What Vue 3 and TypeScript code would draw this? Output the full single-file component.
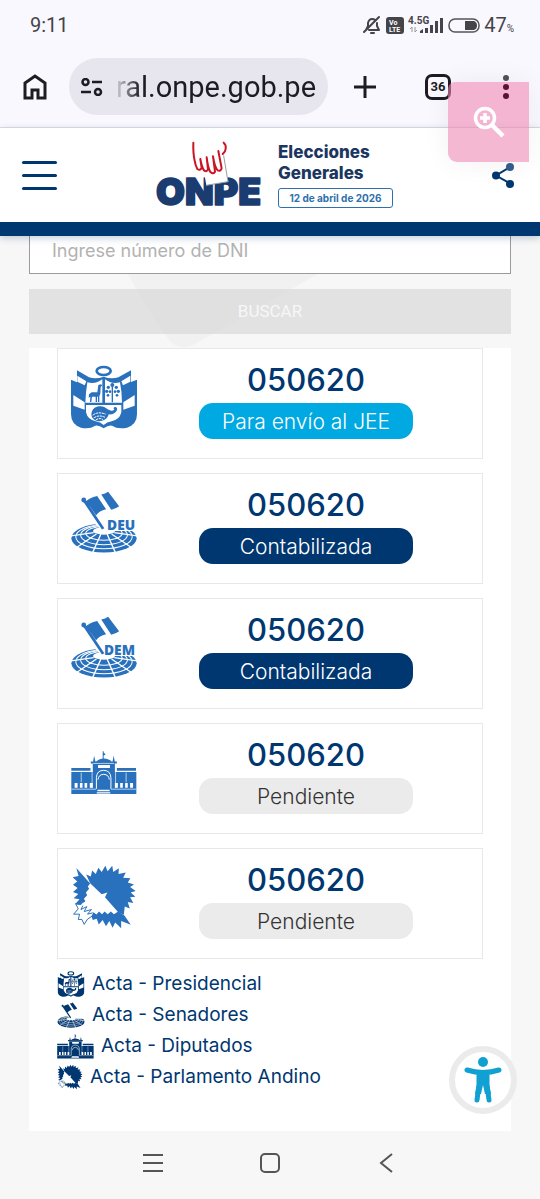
<script setup lang="ts">
import { ref } from 'vue'

interface Box {
  x: number
  y: number
  width: number
  height: number
}

interface Acta {
  icon: string
  box: Box
  tag?: string
  tagX?: number
  name: string
  numero: string
  estado: string
  tone: 'envio' | 'contada' | 'pendiente'
}

interface Leyenda {
  icon: string
  box: Box
  size: string
  label: string
}

const boxes: Record<string, Box> = {
  escudo: { x: 64, y: 60, width: 198, height: 192 },
  curules: { x: 66, y: 64, width: 192, height: 182 },
  palacio: { x: 63, y: 70, width: 200, height: 140 },
  andino: { x: 62, y: 40, width: 200, height: 196 },
}

const viewBox = (b: Box) => `${b.x} ${b.y} ${b.width} ${b.height}`

const actas: Acta[] = [
  { icon: '#escudo', box: boxes.escudo, name: 'Presidencial', numero: '050620', estado: 'Para envío al JEE', tone: 'envio' },
  { icon: '#curules', box: boxes.curules, tag: 'DEU', tagX: 171, name: 'Senadores DEU', numero: '050620', estado: 'Contabilizada', tone: 'contada' },
  { icon: '#curules', box: boxes.curules, tag: 'DEM', tagX: 162, name: 'Senadores DEM', numero: '050620', estado: 'Contabilizada', tone: 'contada' },
  { icon: '#palacio', box: boxes.palacio, name: 'Diputados', numero: '050620', estado: 'Pendiente', tone: 'pendiente' },
  { icon: '#andino', box: boxes.andino, name: 'Parlamento Andino', numero: '050620', estado: 'Pendiente', tone: 'pendiente' },
]

const leyendas: Leyenda[] = [
  { icon: '#escudo', box: boxes.escudo, size: 'medium', label: 'Acta - Presidencial' },
  { icon: '#curules', box: boxes.curules, size: 'medium', label: 'Acta - Senadores' },
  { icon: '#palacio', box: boxes.palacio, size: 'wide', label: 'Acta - Diputados' },
  { icon: '#andino', box: boxes.andino, size: 'small', label: 'Acta - Parlamento Andino' },
]

const dni = ref('')
</script>

<template>
  <div class="screen">
    <svg class="defs" aria-hidden="true">
      <symbol id="escudo" viewBox="64 60 198 192">
        <g fill="currentColor">
          <ellipse cx="162" cy="78" rx="21" ry="12" fill="none" stroke="currentColor" stroke-width="8" />
          <path d="M82 76l36 21q22 6 44-2 22 8 44 2l38-21v35l18-7v103q0 31-30 41-28 5-45-6-11-2-25 8-14-10-25-8-17 11-43 6-30-10-30-41V104l18 8z" />
        </g>
        <g fill="#fff">
          <path d="M83 92l27 17-5 12-22-11zM242 92l-27 17 5 12 22-11zM71 150l34 22v22l-34-12zM255 150l-34 22v22l34-12z" />
          <path d="M113 112q25 7 45-9v70h-51q1-31 6-61zM166 103q20 16 45 9 6 30 6 61h-51zM109 180h106v22q-5 22-29 27-14 2-24 11-10-9-24-11-24-5-29-27z" />
        </g>
        <g fill="currentColor">
          <path d="M118 148l8-6h17l3-22 8-2 4 3-5 5-1 20-3 8v17h-4v-16h-3v16h-4v-16h-11l-2 16h-4l1-16-5 3zM186 122h4v50h-4z" />
          <g>
            <circle cx="188" cy="120" r="6" /><circle cx="176" cy="127" r="5" /><circle cx="200" cy="127" r="5" />
            <circle cx="171" cy="139" r="5" /><circle cx="206" cy="139" r="5" /><circle cx="181" cy="140" r="4" />
            <circle cx="196" cy="140" r="4" /><circle cx="175" cy="151" r="4" /><circle cx="202" cy="151" r="4" />
          </g>
          <path d="M126 202c3-12 14-19 27-18 17 1 20 12 32 13 10 1 11-6 6-7 5-8 15-2 10 7-4 8-14 12-24 11-3 14-18 23-34 20-14-3-20-14-17-26z" />
        </g>
        <g fill="none" stroke="#fff" stroke-width="3">
          <path d="M129 211q15-13 40-3M132 219q16-11 34-2M138 225q12-8 22-1" stroke-dasharray="8 2" />
        </g>
      </symbol>

      <symbol id="curules" viewBox="66 64 192 182">
        <ellipse cx="162" cy="202" rx="95" ry="42" fill="currentColor" />
        <ellipse cx="162" cy="181" rx="32" ry="11" fill="#fff" />
        <g fill="none" stroke="#fff" stroke-width="3">
          <ellipse cx="162" cy="188" rx="53" ry="20" />
          <ellipse cx="162" cy="193" rx="68" ry="28" />
          <ellipse cx="162" cy="198" rx="82" ry="35" />
        </g>
        <g fill="none" stroke="#fff" stroke-width="4">
          <path d="M132 186l-70 10M140 190l-62 42M153 190l-25 56M171 190l25 56M184 190l62 42M192 186l70 10" />
        </g>
        <path fill="#fff" d="M124 150h50l90-14v45h-72l-30-4-8 0z" />
        <g fill="currentColor">
          <circle cx="103" cy="91" r="7" />
          <path d="M100 93l7-4 56 84-7 4zM110 94q9-9 32-15l26 39q-20 5-29 17zM154 75q12-2 20-8l32 42q-9 7-23 10z" />
        </g>
      </symbol>

      <symbol id="palacio" viewBox="63 70 200 140">
        <g fill="currentColor">
          <path d="M64 128h58v8H64zM202 128h58v8h-58zM64 140h197v67H64z" />
          <path d="M123 108h79v6h-79zM129 112h67v34h-67zM130 108l3-17 4 17zM189 108l3-17 4 17zM139 108q8-8 20-9V77h3v4l6 6-6 3v9q17 1 24 9z" />
        </g>
        <g fill="#fff">
          <path d="M145 119h36v9h-36zM74 173h9v15h-9zM90 173h8v15h-8zM104 173h8v15h-8zM120 173h9v15h-9zM196 173h9v15h-9zM212 173h8v15h-8zM227 173h8v15h-8zM242 173h9v15h-9z" />
          <path d="M143 194h37v4h-37zM141 201h41v4h-41z" />
        </g>
        <g fill="none" stroke="#fff" stroke-width="3">
          <path d="M94 142v29M230 142v29M127 135v54M198 135v54M64 192h75M184 192h77" stroke-width="2" />
          <path d="M140 191v-34q1-22 22-22 20 0 22 22v34" />
          <path d="M145 163q1-15 17-16 16 1 17 16" />
          <path d="M130 114h64" stroke-width="2" />
        </g>
      </symbol>

      <symbol id="andino" viewBox="62 40 200 196">
        <g fill="currentColor">
          <path d="M108 70L122 76 126 58 137 68 145 49 155 62 166 43 173 60 187 43 190 62 207 51 206 68 228 64 220 80 242 81 234 94 253 100 241 108 258 120 243 124 257 137 241 139 251 156 234 153 240 173 225 167 222 192 205 184 165 139 172 124 155 130 120 96z" />
          <path d="M78 50L120 97 113 106 117 113 107 124 111 133 101 143 105 150 92 158 94 162 74 160 88 145 70 142 84 129 68 123 82 111 68 101 81 91 67 78 85 74z" />
          <path d="M124 196L130 184 139 191 147 182 156 190 164 182 173 190 183 182 192 190 205 182 224 194 243 222 214 211 214 233 196 215 188 231 178 211 168 227 158 208 146 221 140 204 128 208z" />
        </g>
        <path d="M105 150L90 160 76 158 84 174 70 190 88 190 84 206 95 206 102 221 112 205 126 196M98 164L92 176 110 167 102 182 124 176 112 190 128 186" fill="none" stroke="currentColor" stroke-width="3" />
      </symbol>
    </svg>

    <header class="status">
      <time>9:11</time>
      <div class="signals">
        <svg class="bell" viewBox="0 0 20 20" fill="none" stroke="#444449" stroke-width="2" stroke-linecap="round" stroke-linejoin="round">
          <path d="M4 15l2-4V8q1-4 4-4 2 0 3 1M15 8v3l2 4H7M2 17L17 2M9 18h3" />
        </svg>
        <svg class="volte" viewBox="0 0 18 17">
          <rect width="18" height="17" rx="3" fill="#444449" />
          <text x="3" y="8" class="tiny">Vo</text><text x="3" y="15" class="tiny">LTE</text>
        </svg>
        <svg class="net" viewBox="0 0 36 20">
          <text x="0" y="9" class="gen">4.5G</text>
          <path fill="#444449" d="M12 18v-2l3-2v4zM17 13h3v5h-3zM22 10h3v8h-3zM27 6h3v12h-3zM32 3h3v15h-3z" />
          <path d="M4 17v-5l-2 2M7 12v5l2-2" fill="none" stroke="#999" />
        </svg>
        <svg class="battery" viewBox="0 0 32 15">
          <rect x="1" y="1" width="30" height="13" rx="6" fill="none" stroke="#555" stroke-width="1.5" />
          <path d="M17 3h9q3 1 3 4.500t-3 4.500h-9z" fill="#444449" />
        </svg>
        <span class="charge">47<small>%</small></span>
      </div>
    </header>

    <nav class="browser" aria-label="Navegador">
      <button class="plain home" aria-label="Inicio">
        <svg viewBox="0 0 24 26" fill="none" stroke="#1d1c22" stroke-width="3"><path d="M2 24V9l10-7 10 7v15h-7v-8H9v8z" /></svg>
      </button>
      <div class="address">
        <svg viewBox="0 0 22 18" fill="none" stroke="#1d1c22" stroke-width="2.500"><circle cx="4.500" cy="4" r="3" /><circle cx="17" cy="14" r="3" /><path d="M11 4h10M0 14h10" /></svg>
        <span>ral.onpe.gob.pe</span>
      </div>
      <button class="plain plus" aria-label="Nueva pestaña">
        <svg viewBox="0 0 24 24" stroke="#1d1c22" stroke-width="3"><path d="M12 1v22M1 12h22" /></svg>
      </button>
      <button class="tabs" aria-label="Pestañas abiertas">36</button>
      <button class="plain dots" aria-label="Más opciones">
        <svg viewBox="0 0 6 24" fill="#5c1233"><circle cx="3" cy="3" r="3" fill="#504f55" /><circle cx="3" cy="12" r="3" /><circle cx="3" cy="21" r="3" /></svg>
      </button>
    </nav>

    <header class="site">
      <button class="menu" aria-label="Menú"><i></i><i></i><i></i></button>
      <a class="brand" href="#" aria-label="ONPE Elecciones Generales">
        <svg class="logo" viewBox="0 0 324 204">
          <text x="0" y="192" class="onpe">ONPE</text>
          <g transform="translate(-465 -51)" fill="none" stroke-linecap="round" stroke-linejoin="round">
            <path d="M610 150L616 184 682 173 668 88 630 130z" fill="#fff" />
            <path d="M616 184L681 173 668 95" stroke="#9a9da3" stroke-width="3" />
            <path d="M577 56q-1 32 4 54 2 14 8 25 8 6 13-3l-4-27q4 24 11 34 8 6 12-3l-4-36q4 34 12 45 8 7 13-2l-6-46q5 32 14 42 9 4 12-6l-10-52M668 56q8 7 6 18 0 8-9 16" stroke="#cb1525" stroke-width="6" />
          </g>
        </svg>
        <span class="event">
          <strong>Elecciones<br />Generales</strong>
          <span class="date">12 de abril de 2026</span>
        </span>
      </a>
      <button class="plain share" aria-label="Compartir">
        <svg viewBox="0 0 22 25" fill="#003770"><path d="M18 4L4 12.500l14 8" fill="none" stroke="#003770" stroke-width="2" /><circle cx="18" cy="4" r="4" fill="#355f8e" /><circle cx="4" cy="12.500" r="4" /><circle cx="18" cy="21" r="4" /></svg>
      </button>
    </header>

    <button class="magnify" aria-label="Ampliar">
      <svg viewBox="0 0 32 32" fill="none" stroke="#fff" stroke-width="3.500"><circle cx="12" cy="12" r="9.500" /><path d="M19 19l11 11" stroke-width="4.500" /><path d="M12 7v10M7 12h10" /></svg>
    </button>

    <main>
      <svg class="watermark" viewBox="0 0 190 74" aria-hidden="true"><path fill="#f1f1f1" d="M0 0h190L72 67q-18 12-30 0Q23 42 0 0z" /></svg>
      <form @submit.prevent>
        <input v-model="dni" type="text" inputmode="numeric" aria-label="Número de DNI" placeholder="Ingrese número de DNI" />
        <button class="search" disabled>BUSCAR</button>
      </form>

      <section class="panel">
        <ul class="actas">
          <li v-for="acta in actas" :key="acta.name" class="acta">
            <svg class="emblem" :viewBox="viewBox(acta.box)" role="img" :aria-label="acta.name">
              <use :href="acta.icon" v-bind="acta.box" />
              <text v-if="acta.tag" :x="acta.tagX" y="178" class="tag">{{ acta.tag }}</text>
            </svg>
            <div class="detail">
              <h2>{{ acta.numero }}</h2>
              <button class="state" :class="acta.tone">{{ acta.estado }}</button>
            </div>
          </li>
        </ul>
        <ul class="legend">
          <li v-for="item in leyendas" :key="item.label">
            <svg :class="item.size" :viewBox="viewBox(item.box)" aria-hidden="true">
              <use :href="item.icon" v-bind="item.box" />
            </svg>
            <span>{{ item.label }}</span>
          </li>
        </ul>
      </section>
    </main>

    <button class="access" aria-label="Accesibilidad">
      <svg viewBox="0 0 38 46" fill="none" stroke="#11a0d2" stroke-linecap="round" stroke-linejoin="round">
        <circle cx="19" cy="5" r="5" fill="#11a0d2" stroke="none" />
        <path d="M3 13q16 5 32 0" stroke-width="5" />
        <path d="M13 15h12v12l2 10-6 0-2-9-2 9-6 0 2-10z" fill="#11a0d2" stroke="none" />
        <path d="M15 18v10l-2 15M23 18v10l2 15" stroke-width="5" />
      </svg>
    </button>

    <nav class="system" aria-label="Sistema">
      <button class="plain" aria-label="Recientes"><svg viewBox="0 0 24 24"><path d="M2 4h20M2 12h20M2 20h20" /></svg></button>
      <button class="plain" aria-label="Inicio del sistema"><svg viewBox="0 0 24 24"><rect x="3" y="3" width="18" height="18" rx="4" /></svg></button>
      <button class="plain" aria-label="Atrás"><svg viewBox="0 0 24 24"><path d="M17 3L6 12l11 9" /></svg></button>
    </nav>
  </div>
</template>

<style>
body {
  margin: 0;
  background: #f7f7f7;
}
</style>

<style scoped>
.screen {
  position: relative;
  display: flex;
  flex-direction: column;
  min-height: 100vh;
  background: #f7f7f7;
  font-family: Inter, "Open Sans", sans-serif;
  color: #003770;
}
* {
  box-sizing: border-box;
}
button {
  font: inherit;
  cursor: pointer;
}
ul {
  list-style: none;
  margin: 0;
  padding: 0;
}
svg {
  display: block;
  flex: none;
}
.defs {
  position: absolute;
  width: 0;
  height: 0;
}
.plain {
  display: grid;
  place-items: center;
  border: 0;
  padding: 0;
  background: none;
}

.status {
  display: flex;
  align-items: center;
  justify-content: space-between;
  height: 50px;
  padding: 0 26px 0 30px;
  background: #f9f8fe;
  font-family: Roboto, sans-serif;
  color: #444449;
}
.status time,
.charge {
  font-size: 20px;
}
.signals {
  display: flex;
  align-items: center;
  gap: 4px;
}
.charge small {
  font-size: 10px;
}
.bell {
  width: 20px;
  height: 20px;
}
.volte {
  width: 18px;
  height: 17px;
}
.net {
  width: 36px;
  height: 20px;
}
.battery {
  width: 32px;
  height: 15px;
}
.tiny {
  font: 700 7px Roboto, sans-serif;
  fill: #fff;
}
.gen {
  font: 700 10px Roboto, sans-serif;
  fill: #444449;
}

.browser {
  display: flex;
  align-items: center;
  height: 78px;
  padding: 0 31px 4px 22px;
  border-bottom: 1px solid #dfdee6;
  background: #f9f8fe;
}
.home svg {
  width: 24px;
  height: 26px;
}
.home {
  width: 26px;
}
.address {
  display: flex;
  align-items: center;
  gap: 13px;
  flex: 1;
  min-width: 0;
  height: 57px;
  margin: 0 25px 0 21px;
  padding: 0 0 0 12px;
  border-radius: 29px;
  background: #e7e6ef;
  font-family: Roboto, sans-serif;
  font-size: 29px;
  color: #1d1c22;
}
.address svg {
  width: 22px;
  height: 18px;
}
.address span {
  white-space: nowrap;
  mask-image: linear-gradient(90deg, rgba(0, 0, 0, 0.1), #000 24px);
}
.plus svg {
  width: 24px;
  height: 24px;
}
.tabs {
  width: 26px;
  height: 26px;
  margin: 0 52px 0 48px;
  padding: 0;
  border: 3px solid #1d1c22;
  border-radius: 7px;
  background: none;
  font-family: Roboto, sans-serif;
  font-size: 13px;
  font-weight: 700;
  line-height: 20px;
  color: #1d1c22;
}
.dots {
  position: relative;
  z-index: 3;
}
.dots svg {
  width: 6px;
  height: 24px;
}

.site {
  display: flex;
  align-items: center;
  justify-content: space-between;
  height: 108px;
  padding: 0 26px 0 22px;
  border-bottom: 14px solid #003770;
  background: #fff;
  box-shadow: 0 2px 7px rgba(0, 55, 112, 0.25);
  z-index: 1;
}
.menu {
  display: flex;
  flex-direction: column;
  gap: 10px;
  width: 35px;
  padding: 0;
  border: 0;
  background: none;
}
.menu i {
  height: 3px;
  border-radius: 2px;
  background: #003770;
}
.brand {
  display: flex;
  align-items: center;
  gap: 14px;
  color: #1b365f;
  text-decoration: none;
}
.logo {
  width: 108px;
  height: 68px;
  overflow: visible;
}
.onpe {
  font: 900 112px Inter, sans-serif;
  fill: #1b3c70;
  stroke: #1b3c70;
  stroke-width: 5px;
  stroke-linejoin: round;
}
.event strong {
  display: block;
  font-size: 17px;
  font-weight: 800;
  line-height: 21px;
}
.date {
  display: block;
  width: 115px;
  margin-top: 4px;
  border: 1px solid #2d70ad;
  border-radius: 3px;
  font-size: 10px;
  font-weight: 700;
  line-height: 18px;
  text-align: center;
  white-space: nowrap;
  color: #2d70ad;
}
.share svg {
  width: 22px;
  height: 25px;
}

.magnify {
  position: absolute;
  top: 82px;
  right: 11px;
  z-index: 2;
  display: grid;
  place-items: center;
  width: 81px;
  height: 80px;
  padding: 0;
  border: 0;
  border-radius: 7px 0 0 9px;
  background: rgba(237, 132, 178, 0.58);
  box-shadow: 0 0 28px rgba(0, 0, 0, 0.06);
}
.magnify svg {
  width: 32px;
  height: 32px;
}

main {
  position: relative;
  padding: 0 29px;
}
.watermark {
  position: absolute;
  top: 38px;
  left: 128px;
  width: 190px;
  height: 74px;
}
form {
  position: relative;
}
input {
  display: block;
  width: 100%;
  height: 38px;
  padding: 0 22px 8px;
  border: 1px solid #9b9b9b;
  border-top: 0;
  border-radius: 0;
  outline: 0;
  background: #fff;
  font-family: inherit;
  font-size: 18px;
  font-weight: 400;
}
input::placeholder {
  color: #b2b2b2;
  opacity: 1;
}
.search {
  display: block;
  width: 100%;
  height: 45px;
  margin: 15px 0 14px;
  padding: 0 0 2px;
  border: 0;
  background: rgba(216, 216, 216, 0.7);
  font-family: Roboto, sans-serif;
  font-size: 17px;
  font-weight: 400;
  color: #f7f7f7;
}
.panel {
  position: relative;
  padding: 0 28px 39px;
  background: #fff;
}
.actas {
  display: grid;
  gap: 14px;
}
.acta {
  display: flex;
  align-items: flex-start;
  height: 111px;
  padding: 15px 7px 0 13px;
  border: 1px solid #e8e8e8;
}
.emblem {
  width: 66px;
  height: 66px;
  color: #2971bd;
}
.tag {
  font: 800 40px "Open Sans", sans-serif;
  fill: currentColor;
}
.detail {
  display: flex;
  flex: 1;
  flex-direction: column;
  align-items: center;
}
h2 {
  margin: 0;
  font-size: 31px;
  font-weight: 500;
  line-height: 32px;
}
.state {
  width: 214px;
  height: 36px;
  margin-top: 7px;
  padding: 0;
  border: 0;
  border-radius: 14px;
  font-size: 21px;
  font-weight: 300;
}
.envio {
  background: #00a9e2;
  color: #fff;
}
.contada {
  background: #003770;
  color: #fff;
}
.pendiente {
  background: #ebebeb;
  color: #333;
}
.legend {
  padding-top: 9px;
}
.legend li {
  display: flex;
  align-items: center;
  gap: 7px;
  height: 31px;
  font-size: 19px;
}
.medium {
  width: 28px;
  height: 26px;
}
.wide {
  width: 37px;
  height: 26px;
}
.small {
  width: 26px;
  height: 26px;
}

.access {
  position: absolute;
  right: 23px;
  bottom: 85px;
  display: grid;
  place-items: center;
  width: 68px;
  height: 68px;
  padding: 0;
  border: 6px solid #ebebeb;
  border-radius: 50%;
  background: #fff;
}
.access svg {
  width: 38px;
  height: 46px;
}
.system {
  display: flex;
  align-items: center;
  justify-content: center;
  gap: 93px;
  flex: 1;
  min-height: 64px;
  padding-bottom: 4px;
}
.system svg {
  width: 24px;
  height: 24px;
  fill: none;
  stroke: #555;
  stroke-width: 2px;
}
</style>
